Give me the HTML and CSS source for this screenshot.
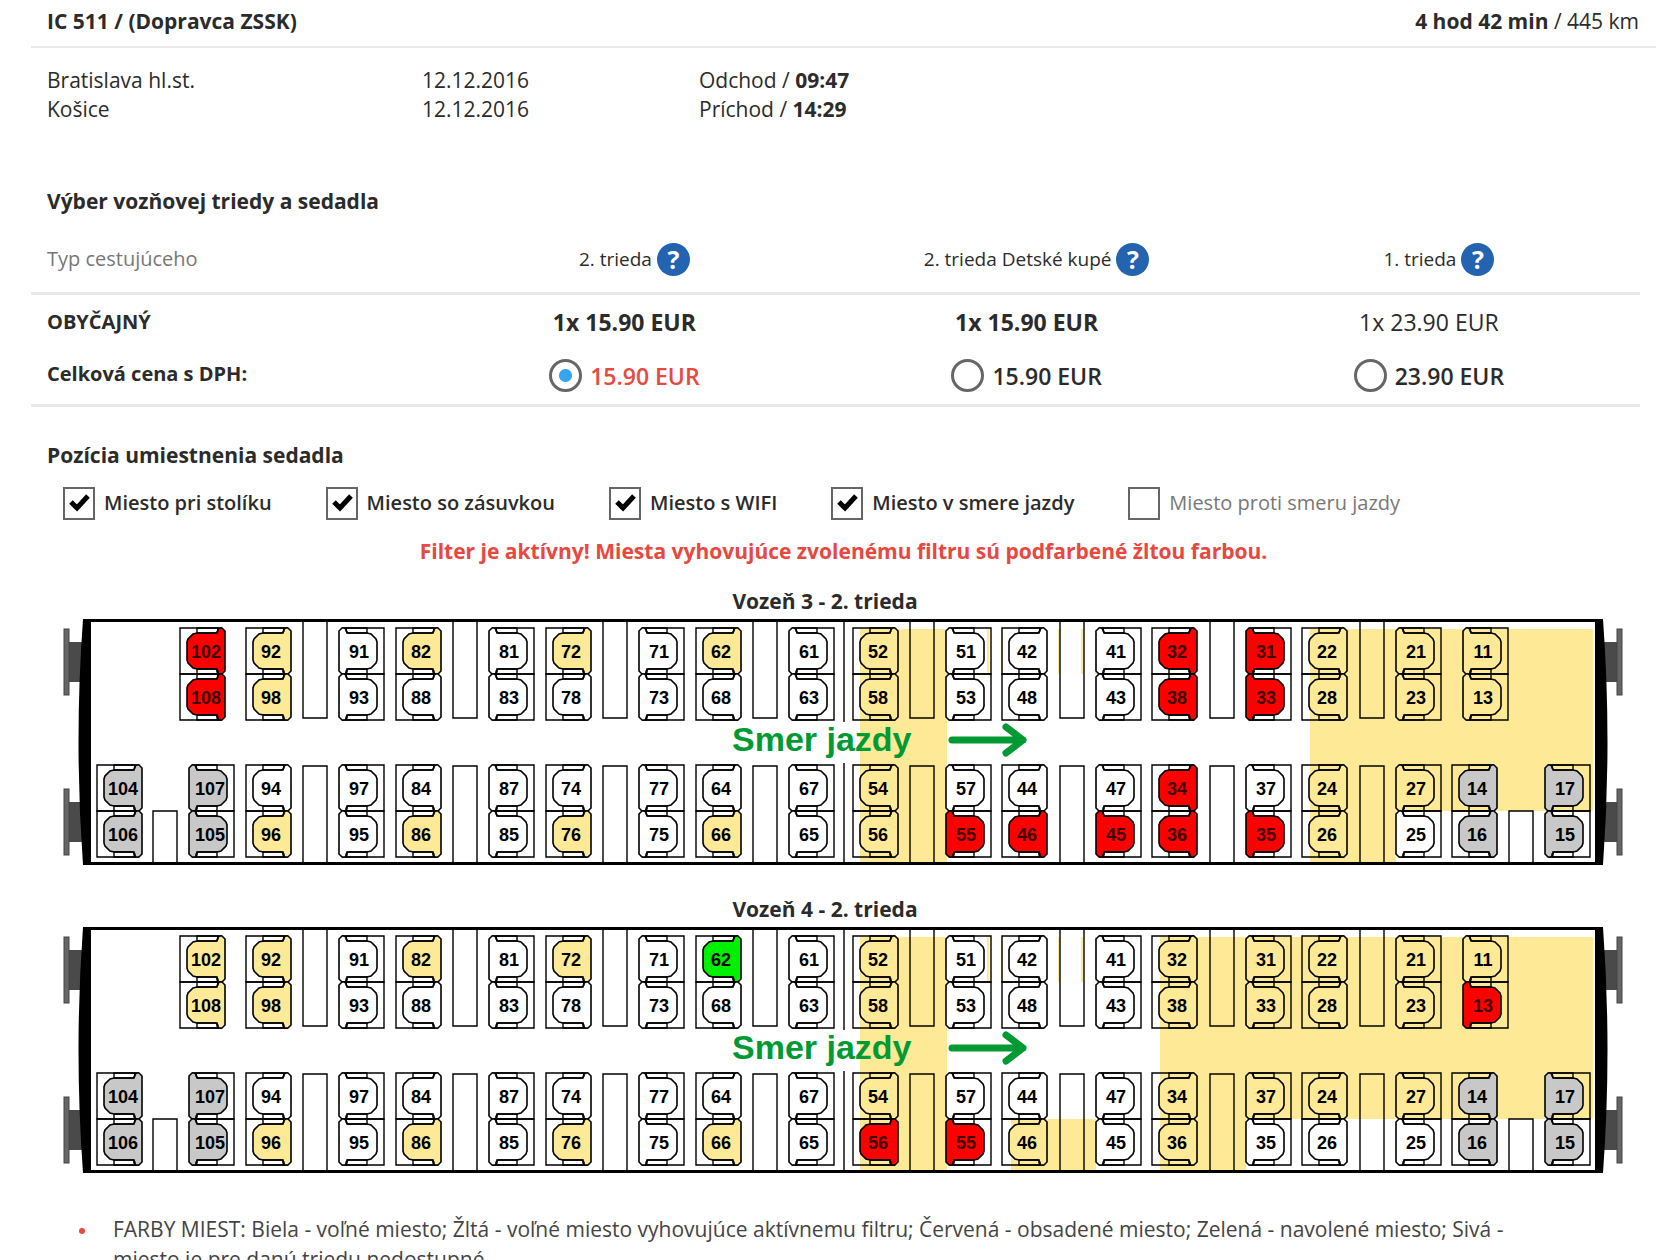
FILE: index.html
```html
<!DOCTYPE html>
<html lang="sk">
<head>
<meta charset="utf-8">
<title>IC 511 – výber sedadla</title>
<link rel="stylesheet" href="styles.css">
</head>
<body>
<main class="page">
  <header class="train">
    <h1 class="train-name">IC 511 / (Dopravca ZSSK)</h1>
    <p class="train-length"><b>4 hod 42 min</b> / 445 km</p>
  </header>

  <section class="stops">
    <span>Bratislava hl.st.</span><span>12.12.2016</span><span>Odchod / <b>09:47</b></span>
    <span>Košice</span><span>12.12.2016</span><span>Príchod / <b>14:29</b></span>
  </section>

  <h2 class="title">Výber vozňovej triedy a sedadla</h2>
  <table class="fares">
    <thead>
      <tr>
        <th scope="col" class="row-name muted">Typ cestujúceho</th>
        <th scope="col"><span class="class-name">2. trieda <button type="button" class="help" aria-label="Pomoc">?</button></span></th>
        <th scope="col"><span class="class-name">2. trieda Detské kupé <button type="button" class="help" aria-label="Pomoc">?</button></span></th>
        <th scope="col"><span class="class-name">1. trieda <button type="button" class="help" aria-label="Pomoc">?</button></span></th>
      </tr>
    </thead>
    <tbody>
      <tr class="unit">
        <th scope="row" class="row-name">OBYČAJNÝ</th>
        <td><b>1x 15.90 EUR</b></td>
        <td><b>1x 15.90 EUR</b></td>
        <td>1x 23.90 EUR</td>
      </tr>
      <tr class="total">
        <th scope="row" class="row-name">Celková cena s DPH:</th>
        <td><label class="price"><input type="radio" name="fare" class="radio" checked><span>15.90 EUR</span></label></td>
        <td><label class="price"><input type="radio" name="fare" class="radio"><span>15.90 EUR</span></label></td>
        <td><label class="price"><input type="radio" name="fare" class="radio"><span>23.90 EUR</span></label></td>
      </tr>
    </tbody>
  </table>

  <h2 class="title title-position">Pozícia umiestnenia sedadla</h2>
  <div class="filters">
    <label class="filter"><input type="checkbox" class="check" checked><span>Miesto pri stolíku</span></label>
    <label class="filter"><input type="checkbox" class="check" checked><span>Miesto so zásuvkou</span></label>
    <label class="filter"><input type="checkbox" class="check" checked><span>Miesto s WIFI</span></label>
    <label class="filter"><input type="checkbox" class="check" checked><span>Miesto v smere jazdy</span></label>
    <label class="filter"><input type="checkbox" class="check"><span>Miesto proti smeru jazdy</span></label>
  </div>
  <p class="notice">Filter je aktívny! Miesta vyhovujúce zvolenému filtru sú podfarbené žltou farbou.</p>

  <section class="wagon">
    <h3 class="wagon-name">Vozeň 3 - 2. trieda</h3>
    <svg class="plan" id="wagon-3" viewBox="0 0 1566 248" role="img" aria-label="Vozeň 3"></svg>
  </section>
  <section class="wagon">
    <h3 class="wagon-name">Vozeň 4 - 2. trieda</h3>
    <svg class="plan" id="wagon-4" viewBox="0 0 1566 248" role="img" aria-label="Vozeň 4"></svg>
  </section>

  <ul class="legend">
    <li>FARBY MIEST: Biela - voľné miesto; Žltá - voľné miesto vyhovujúce aktívnemu filtru; Červená - obsadené miesto; Zelená - navolené miesto; Sivá - miesto je pre danú triedu nedostupné.</li>
  </ul>
</main>
<script src="wagons.js"></script>
</body>
</html>
```
FILE: styles.css
```css
* { box-sizing: border-box; }

body {
  margin: 0;
  background: #fff;
  color: #2b2b2b;
  font: 21px/30px "Open Sans", "Noto Sans", sans-serif;
}

h1, h2, h3, p, ul { margin: 0; }

.page { padding: 0 24px 0 31px; }

.train {
  display: flex;
  justify-content: space-between;
  padding: 6px 17px 10px 16px;
  border-bottom: 2px solid #e6e8ea;
}
.train-name { font-size: 21px; line-height: 30px; }

.stops {
  display: grid;
  grid-template-columns: 375px 277px 1fr;
  padding: 18px 16px 0;
  line-height: 29px;
}

.title {
  margin-top: 62px;
  padding-left: 16px;
  font-size: 21px;
  line-height: 30px;
}
.title-position { margin-top: 33px; }

.fares {
  width: calc(100% - 16px);
  margin-top: 17px;
  border-collapse: collapse;
  table-layout: fixed;
  text-align: center;
}
.fares th, .fares td { padding: 0; }
.fares thead th {
  height: 60px;
  padding-bottom: 6px;
  border-bottom: 3px solid #e8eaec;
  font-weight: 400;
  font-size: 19px;
}
.fares .row-name {
  padding-left: 16px;
  font-size: 20px;
  text-align: left;
}
.fares .muted { color: #777; }
.fares td {
  padding-right: 20px;
  font-size: 23px;
}
.fares .unit > * { height: 58px; padding-bottom: 2px; }
.fares .total > * { height: 54px; padding-top: 3px; }
.fares .total .row-name { padding: 0 0 6px 16px; }
.total { border-bottom: 3px solid #e8eaec; }

.class-name {
  display: inline-flex;
  align-items: center;
  gap: 5px;
}
.help {
  width: 33px;
  height: 33px;
  padding: 0;
  border: 0;
  border-radius: 50%;
  background: #2463b0;
  color: #fff;
  font: 700 25px/33px "Open Sans", sans-serif;
}

.price {
  display: inline-flex;
  align-items: center;
  gap: 8px;
  font-weight: 600;
}
.radio {
  appearance: none;
  width: 33px;
  height: 33px;
  margin: 0;
  border: 3px solid #666;
  border-radius: 50%;
}
.radio:checked { background: radial-gradient(circle, #36a4f2 6px, transparent 7px); }
.radio:checked + span { color: #e74840; }

.filters {
  display: flex;
  gap: 54px;
  margin-top: 17px;
  padding-left: 32px;
}
.filter {
  display: flex;
  align-items: center;
  gap: 9px;
  font-size: 20px;
  font-weight: 600;
}
.check {
  appearance: none;
  width: 32px;
  height: 33px;
  margin: 0;
  border: 2px solid #666;
}
.check:checked {
  background: url('data:image/svg+xml,<svg xmlns="http://www.w3.org/2000/svg" viewBox="0 0 28 29"><path d="M6 13 L12 19 L23 7" fill="none" stroke="black" stroke-width="5"/></svg>') center no-repeat;
}
.check:not(:checked) + span { color: #777; font-weight: 400; }

.notice {
  margin-top: 16px;
  color: #e74840;
  font-weight: 700;
  text-align: center;
}

.wagon { padding: 0 30px 0 29px; margin-top: 20px; }
.wagon + .wagon { margin-top: 28px; }
.wagon-name {
  padding: 0 36px 2px 0;
  font-size: 21px;
  line-height: 30px;
  text-align: center;
}
.plan { display: block; width: 100%; }

.frame { fill: none; stroke: #000; stroke-width: 1.4; }
.shell { fill: #000; }
.buffer { fill: #666; stroke: #444; }
.stem { fill: #4a4a4a; }
.zone { fill: #feea96; }
.trace { stroke: #feea96; stroke-width: 2; }
.body { stroke: #000; stroke-width: 1.6; fill: #fff; }
.body.y { fill: #feea96; }
.body.r { fill: #fd0000; }
.body.g { fill: #00f000; }
.body.x { fill: #c8c8c8; }
.arm { fill: none; stroke: #000; stroke-width: 1.4; }
.number {
  font: 700 18px "Liberation Sans", sans-serif;
  text-anchor: middle;
}
.number.r { fill: #400000; }
.direction { fill: #009a35; font: 700 34px "Liberation Sans", sans-serif; }
.arrow {
  fill: none;
  stroke: #009a35;
  stroke-width: 7;
  stroke-linecap: round;
  stroke-linejoin: round;
}

.legend {
  margin-top: 40px;
  padding: 0 100px 0 82px;
  list-style: none;
  color: #444;
}
.legend li { position: relative; }
.legend li::before {
  content: "";
  position: absolute;
  left: -34px;
  top: 14px;
  width: 6px;
  height: 6px;
  border-radius: 50%;
  background: #e74840;
}
```
FILE: wagons.js
```js
// Seat columns: x, direction the seat faces (L/R), upper and lower seat number.
const UPPER = [
  [120, 'L', 102, 108], [186, 'L', 92, 98], [279, 'R', 91, 93], [336, 'L', 82, 88],
  [429, 'R', 81, 83], [486, 'L', 72, 78], [579, 'R', 71, 73], [636, 'L', 62, 68],
  [729, 'R', 61, 63], [793, 'L', 52, 58], [886, 'R', 51, 53], [942, 'L', 42, 48],
  [1036, 'R', 41, 43], [1092, 'L', 32, 38], [1186, 'R', 31, 33], [1242, 'L', 22, 28],
  [1336, 'R', 21, 23], [1403, 'R', 11, 13]
];
const LOWER = [
  [37, 'L', 104, 106], [129, 'R', 107, 105], [186, 'L', 94, 96], [279, 'R', 97, 95],
  [336, 'L', 84, 86], [429, 'R', 87, 85], [486, 'L', 74, 76], [579, 'R', 77, 75],
  [636, 'L', 64, 66], [729, 'R', 67, 65], [793, 'L', 54, 56], [886, 'R', 57, 55],
  [942, 'L', 44, 46], [1036, 'R', 47, 45], [1092, 'L', 34, 36], [1186, 'R', 37, 35],
  [1242, 'L', 24, 26], [1336, 'R', 27, 25], [1392, 'L', 14, 16], [1485, 'R', 17, 15]
];
const TABLES = [243, 393, 543, 693, 850, 1000, 1150, 1300];
const CLOSED = [104, 106, 107, 105, 14, 16, 17, 15];

const WAGONS = {
  'wagon-3': {
    r: [102, 108, 32, 38, 31, 33, 55, 46, 45, 34, 36, 35],
    g: [],
    y: [92, 98, 82, 72, 62, 96, 86, 76, 66, 52, 58, 54, 56, 22, 28, 24, 26, 21, 23, 27, 11, 13],
    zones: [[800, 11, 87, 233], [1250, 11, 283, 182], [1250, 193, 86, 51]]
  },
  'wagon-4': {
    r: [56, 55, 13],
    g: [62],
    y: [102, 108, 92, 98, 82, 72, 96, 86, 76, 66, 52, 58, 54, 46, 32, 38, 34, 36,
        31, 33, 37, 22, 28, 24, 21, 23, 27, 11],
    zones: [[800, 11, 87, 233], [951, 193, 85, 51], [1100, 11, 433, 182], [1100, 193, 86, 51]]
  }
};

const BODY = 'M38 1 L40 0 H42 L45 3 V43 L42 46 H39 L37 44 V41 H17 L13 40 L8 35 L7 32 V14 L8 11 L13 6 L17 5 H37 Z';

function seat(x, y, side, n, state) {
  const flip = side === 'R' ? ' transform="translate(45 0) scale(-1 1)"' : '';
  const tx = (side === 'R' ? 20 : 25) + (n > 99 ? 1 : 0);
  return `<g transform="translate(${x} ${y})"><g${flip}>` +
    '<path class="frame" d="M42 0 H0 V46 H42"/>' +
    `<path class="body ${state}" d="${BODY}"/>` +
    `<path class="arm" d="M17 0 H38 V3 L36 5 H17 Z M17 46 H38 V43 L36 41 H17 Z"/></g>` +
    `<text class="number ${state}" x="${tx}" y="30">${n}</text></g>`;
}

function draw(id) {
  const w = WAGONS[id];
  const state = n => CLOSED.includes(n) ? 'x' : w.r.includes(n) ? 'r' : w.g.includes(n) ? 'g' : w.y.includes(n) ? 'y' : '';
  let s = '';
  for (const [x, y, a, b] of w.zones) s += `<rect class="zone" x="${x}" y="${y}" width="${a}" height="${b}"/>`;
  s += '<path class="trace" d="M928 11 V56 M942 11 V56 M999 11 V56 M1022 11 V56 M1036 11 V56"/>';
  for (const y of [11, 171]) {
    for (const [px, sx] of [[4, 9], [1557, 1542]]) {
      s += `<rect class="stem" x="${sx}" y="${y + 13}" width="15" height="40"/>`;
      s += `<rect class="buffer" x="${px}" y="${y}" width="5" height="66"/>`;
    }
  }
  s += '<path class="shell" d="M23 1 H1543 Q1552 124 1543 247 H23 Q14 124 23 1 Z M31 4 V244 H1535 V4 Z" fill-rule="evenodd"/>';
  for (const x of TABLES) s += `<path class="frame" d="M${x} 4 V100 H${x + 24} V4 M${x} 244 V148 H${x + 24} V244"/>`;
  s += '<path class="frame" d="M93 244 V193 H117 V244 M1449 244 V193 H1473 V244 M784 4 V104 M784 145 V244"/>';
  for (const [cols, y] of [[UPPER, 10], [LOWER, 147]]) {
    for (const [x, side, a, b] of cols) s += seat(x, y, side, a, state(a)) + seat(x, y + 46, side, b, state(b));
  }
  s += '<text class="direction" x="672" y="133">Smer jazdy</text>';
  s += '<path class="arrow" d="M892 122 H963 M946 109 L963 122 L946 135"/>';
  document.getElementById(id).innerHTML = s;
}

Object.keys(WAGONS).forEach(draw);
```
